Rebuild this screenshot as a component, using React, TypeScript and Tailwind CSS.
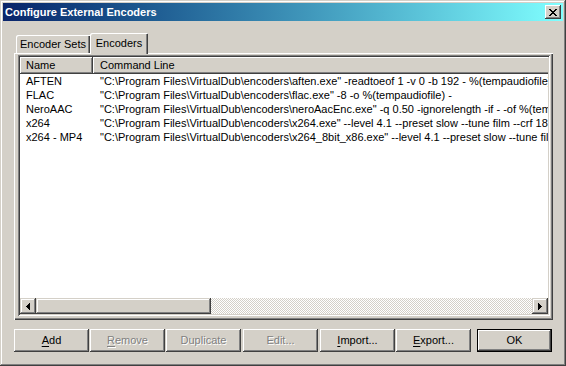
import React from "react";

const BTN_RAISED =
  "shadow-[inset_-1px_-1px_#404040,inset_1px_1px_#ffffff,inset_-2px_-2px_#808080,inset_2px_2px_#d4d0c8]";

function CloseX() {
  return (
    <svg width="8" height="7" viewBox="0 0 8 7" shapeRendering="crispEdges">
      <path
        d="M0 0h2v1h-2zM6 0h2v1h-2zM1 1h2v1h-2zM5 1h2v1h-2zM2 2h4v1h-4zM3 3h2v1h-2zM2 4h4v1h-4zM1 5h2v1h-2zM5 5h2v1h-2zM0 6h2v1h-2zM6 6h2v1h-2z"
        fill="#000"
      />
    </svg>
  );
}

function ArrowLeft() {
  return (
    <svg width="4" height="7" viewBox="0 0 4 7" shapeRendering="crispEdges">
      <path d="M3 0h1v7h-1zM2 1h1v5h-1zM1 2h1v3h-1zM0 3h1v1h-1z" fill="#000" />
    </svg>
  );
}

function ArrowRight() {
  return (
    <svg width="4" height="7" viewBox="0 0 4 7" shapeRendering="crispEdges">
      <path d="M0 0h1v7h-1zM1 1h1v5h-1zM2 2h1v3h-1zM3 3h1v1h-1z" fill="#000" />
    </svg>
  );
}

const rows: [string, string][] = [
  ["AFTEN", '"C:\\Program Files\\VirtualDub\\encoders\\aften.exe" -readtoeof 1 -v 0 -b 192 - %(tempaudiofile)'],
  ["FLAC", '"C:\\Program Files\\VirtualDub\\encoders\\flac.exe" -8 -o %(tempaudiofile) -'],
  ["NeroAAC", '"C:\\Program Files\\VirtualDub\\encoders\\neroAacEnc.exe" -q 0.50 -ignorelength -if - -of %(tempaudiofile)'],
  ["x264", '"C:\\Program Files\\VirtualDub\\encoders\\x264.exe" --level 4.1 --preset slow --tune film --crf 18 --output'],
  ["x264 - MP4", '"C:\\Program Files\\VirtualDub\\encoders\\x264_8bit_x86.exe" --level 4.1 --preset slow --tune film --crf'],
];

function PushButton({
  children,
  disabled,
  className,
}: {
  children: React.ReactNode;
  disabled?: boolean;
  className?: string;
}) {
  return (
    <div
      className={
        "w-[75px] h-[23px] shrink-0 flex items-center justify-center bg-[#d4d0c8] shadow-[inset_-1px_-1px_#404040,inset_1px_1px_#ffffff,inset_-2px_-2px_#808080,inset_2px_2px_#d4d0c8] " +
        (disabled ? "text-[#808080] [text-shadow:1px_1px_0_#ffffff] " : "text-black ") +
        (className ?? "")
      }
    >
      <span className="leading-[13px]">{children}</span>
    </div>
  );
}

export default function App() {
  return (
    <div className="w-[566px] h-[366px] bg-[#d4d0c8] p-[3px] flex flex-col font-['Liberation_Sans',Arial,sans-serif] text-[11px] text-black shadow-[inset_-1px_-1px_#404040,inset_1px_1px_#d4d0c8,inset_-2px_-2px_#808080,inset_2px_2px_#ffffff] select-none overflow-hidden">
      {/* Title bar */}
      <div className="h-[18px] shrink-0 flex items-center justify-between bg-linear-to-r from-[#0a246a] to-[#80ffff] pl-[2px] pr-[2px]">
        <span className="text-white font-bold text-[11px] leading-[13px]">Configure External Encoders</span>
        <div className="w-[16px] h-[14px] bg-[#d4d0c8] flex items-center justify-center shadow-[inset_-1px_-1px_#404040,inset_1px_1px_#ffffff,inset_-2px_-2px_#808080,inset_2px_2px_#d4d0c8]">
          <div className="mt-[0px] ml-[0px]">
            <CloseX />
          </div>
        </div>
      </div>

      {/* Body */}
      <div className="flex flex-col pl-[11px] pt-[12px]">
        {/* Tabs */}
        <div className="flex items-end h-[20px] pl-[2px]">
          <div className="w-[74px] h-[18px] rounded-tl-[2px] bg-[#d4d0c8] flex items-center justify-center pt-[1px] shadow-[inset_1px_1px_#ffffff,inset_-1px_0_#404040,inset_-2px_0_#808080]">
            <span className="leading-[13px]">Encoder Sets</span>
          </div>
          <div className="relative z-10 w-[58px] h-[21px] -mb-[1px] rounded-tl-[2px] rounded-tr-[1px] bg-[#d4d0c8] flex items-start justify-center pt-[4px] shadow-[inset_1px_1px_#ffffff,inset_-1px_0_#404040,inset_-2px_0_#808080]">
            <span className="leading-[13px]">Encoders</span>
          </div>
        </div>

        {/* Panel */}
        <div className="w-[539px] h-[267px] bg-[#d4d0c8] pt-[2px] pl-[4px] shadow-[inset_1px_1px_#ffffff,inset_-1px_-1px_#404040,inset_-2px_-2px_#808080]">
          <div className="w-[532px] h-[261px] bg-white p-[2px] flex flex-col shadow-[inset_1px_1px_#808080,inset_-1px_-1px_#ffffff,inset_2px_2px_#404040,inset_-2px_-2px_#d4d0c8]">
            <div className="flex-1 flex flex-col overflow-hidden">
              {/* Header */}
              <div className="h-[17px] shrink-0 flex">
                <div className={"w-[73px] shrink-0 flex items-center pl-[6px] bg-[#d4d0c8] " + BTN_RAISED}>
                  <span className="leading-[13px]">Name</span>
                </div>
                <div className="w-[600px] shrink-0 flex items-center pl-[7px] bg-[#d4d0c8] shadow-[inset_-1px_-1px_#404040,inset_1px_1px_#ffffff,inset_-2px_-2px_#808080,inset_2px_2px_#d4d0c8]">
                  <span className="leading-[13px]">Command Line</span>
                </div>
              </div>
              {/* Rows */}
              {rows.map(([name, cmd]) => (
                <div key={name} className="h-[14px] shrink-0 flex whitespace-nowrap leading-[14px]">
                  <div className="w-[73px] shrink-0 pl-[6px]">{name}</div>
                  <div className="pl-[7px] shrink-0">{cmd}</div>
                </div>
              ))}
              <div className="flex-1" />
            </div>
            {/* Scrollbar */}
            <div className="h-[16px] shrink-0 flex">
              <div className="w-[16px] h-[16px] shrink-0 bg-[#d4d0c8] flex items-center justify-center shadow-[inset_-1px_-1px_#404040,inset_1px_1px_#d4d0c8,inset_-2px_-2px_#808080,inset_2px_2px_#ffffff]">
                <ArrowLeft />
              </div>
              <div className="w-[175px] h-[16px] shrink-0 bg-[#d4d0c8] shadow-[inset_-1px_-1px_#404040,inset_1px_1px_#d4d0c8,inset_-2px_-2px_#808080,inset_2px_2px_#ffffff]" />
              <div className="flex-1 h-[16px] bg-[image:repeating-conic-gradient(#d4d0c8_0%_25%,#ffffff_0%_50%)] bg-size-[2px_2px]" />
              <div className="w-[16px] h-[16px] shrink-0 bg-[#d4d0c8] flex items-center justify-center shadow-[inset_-1px_-1px_#404040,inset_1px_1px_#d4d0c8,inset_-2px_-2px_#808080,inset_2px_2px_#ffffff]">
                <ArrowRight />
              </div>
            </div>
          </div>
        </div>

        {/* Buttons */}
        <div className="flex mt-[9px]">
          <PushButton>
            <span className="underline underline-offset-[2px]">A</span>dd
          </PushButton>
          <PushButton disabled className="ml-[1px]">
            <span className="underline underline-offset-[2px]">R</span>emove
          </PushButton>
          <PushButton disabled className="ml-[1px]">
            Duplicate
          </PushButton>
          <PushButton disabled className="ml-[2px]">
            Edit...
          </PushButton>
          <PushButton className="ml-[2px]">
            <span className="underline underline-offset-[2px]">I</span>mport...
          </PushButton>
          <PushButton className="ml-[1px]">
            <span className="underline underline-offset-[2px]">E</span>xport...
          </PushButton>
          <div className="ml-[6px] w-[75px] h-[23px] shrink-0 border border-black bg-[#d4d0c8] flex items-center justify-center shadow-[inset_-1px_-1px_#404040,inset_1px_1px_#ffffff,inset_-2px_-2px_#808080,inset_2px_2px_#d4d0c8]">
            <span className="leading-[13px]">OK</span>
          </div>
        </div>
      </div>
    </div>
  );
}
